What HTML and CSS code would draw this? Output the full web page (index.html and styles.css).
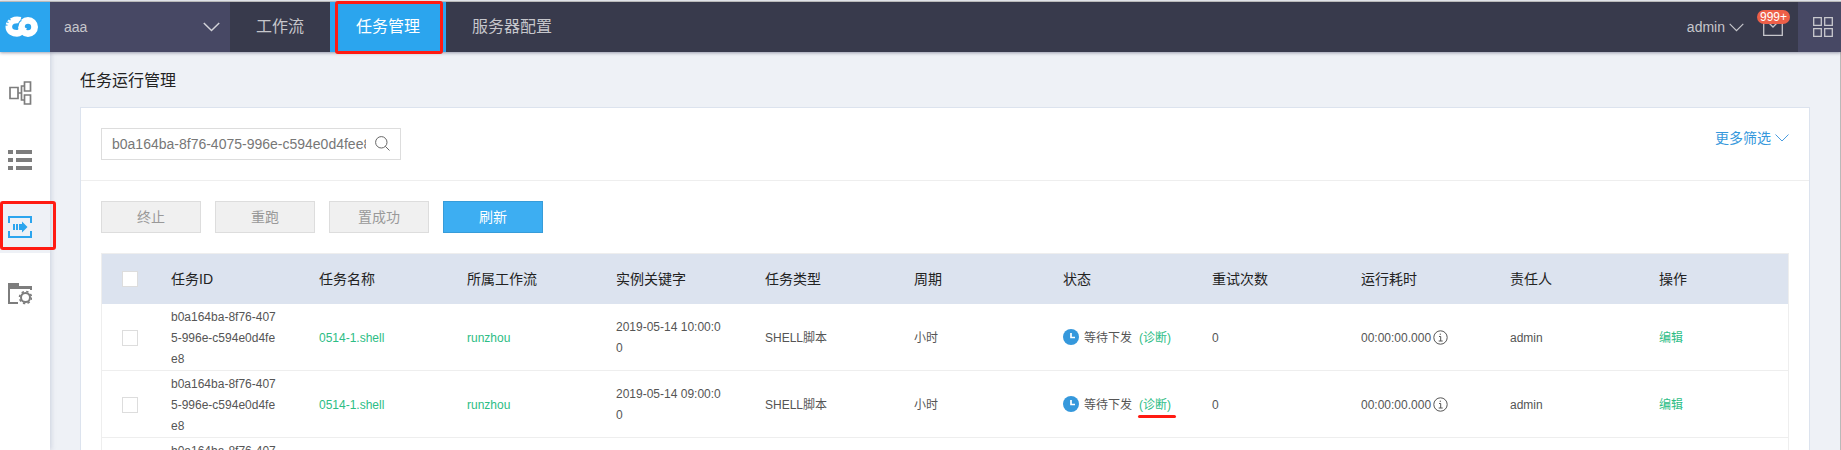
FILE: index.html
```
<!DOCTYPE html>
<html lang="zh-CN">
<head>
<meta charset="utf-8">
<title>任务运行管理</title>
<link rel="stylesheet" href="styles.css">
</head>
<body>
<header class="topbar">
  <div class="logo">
    <svg width="36" height="22" viewBox="0 0 36 22" fill="none" stroke="#fff">
      <path d="M17.500 4.300C12 3 5.800 5 5.800 10.800C5.800 16 10.500 17.400 14 17.400C17.500 17.400 19.500 14 21 11" stroke-width="6.600"/>
      <circle cx="25" cy="11" r="6.600" stroke-width="6.800"/>
      <path d="M18.500 4.500C14.500 5.500 16 10 13.500 13.500M1.500 5l4 1.500M.5 8.500l4 .7M5 2l2.500 2" stroke="#2ba5ee" stroke-width="1.100"/>
    </svg>
  </div>
  <div class="project">aaa<svg width="17" height="10" viewBox="0 0 17 10" fill="none" stroke="#d3d3d9" stroke-width="1.500"><path d="M.8 1l7.700 7.500L16.200 1"/></svg></div>
  <nav class="nav">
    <a>工作流</a>
    <a class="active">任务管理<span class="mark mark-nav"></span></a>
    <a>服务器配置</a>
  </nav>
  <div class="user">admin<svg width="15" height="9" viewBox="0 0 15 9" fill="none" stroke="#c6c6cb" stroke-width="1.200"><path d="M.7.8l6.800 6.800L14.300.8"/></svg></div>
  <div class="mail">
    <svg width="20" height="19" viewBox="0 0 20 19" fill="none" stroke="#c6c6cb" stroke-width="1.300"><path d="M.7 2v16.300h18.600V2zM5 5l5 5 5-5"/></svg>
    <span class="count">999+</span>
  </div>
  <div class="apps">
    <svg width="20" height="20" viewBox="0 0 20 20" fill="none" stroke="#c9c9ce" stroke-width="1.300"><path d="M.7.700h7.600v7.600H.7zM11.700.700h7.600v7.600h-7.600zM.7 11.700h7.600v7.600H.7zM11.700 11.700h7.600v7.600h-7.600z"/></svg>
  </div>
</header>
<div class="body">
  <aside class="side">
    <a><svg width="24" height="26" viewBox="0 0 24 26" fill="none" stroke="#7d7d7d" stroke-width="1.700"><path d="M2 7.500h8v11H2zM16.500 2h6v9h-6zM16.500 15h6v9h-6zM10 13h3M16.500 6h-3v14h3"/></svg></a>
    <a><svg width="24" height="20" viewBox="0 0 24 20" fill="#7d7d7d"><path d="M0 0h5v4H0zM8 0h16v4H8zM0 8h5v4H0zM8 8h16v4H8zM0 16h5v4H0zM8 16h16v4H8z"/></svg></a>
    <a class="on"><svg width="24" height="22" viewBox="0 0 24 22"><path d="M1 7V1h22v6M1 15v6h22v-6" fill="none" stroke="#2ba5ee" stroke-width="2"/><path d="M5 8h2v6H5zM8 8h2v6H8zM11 8h3V5.500l5.500 5.500-5.500 5.500V14h-3z" fill="#2ba5ee"/></svg><span class="mark mark-side"></span></a>
    <a><svg width="24" height="22" viewBox="0 0 24 22"><path d="M0 0h11v3h13v4h-2V6H2v13h8v2H0z" fill="#7d7d7d"/><g fill="none" stroke="#7d7d7d"><circle cx="17.500" cy="14.500" r="4.500" stroke-width="2"/><circle cx="17.500" cy="14.500" r="6" stroke-width="1.600" stroke-dasharray="2.350 2.362"/></g></svg></a>
  </aside>
  <main class="main">
    <h1>任务运行管理</h1>
    <section class="card">
      <div class="filter">
        <div class="search"><span>b0a164ba-8f76-4075-996e-c594e0d4fee8</span><svg width="15" height="15" viewBox="0 0 15 15" fill="none" stroke="#666"><circle cx="6.300" cy="6.300" r="5.700"/><path d="M10.300 10.300l4.200 4.200"/></svg></div>
        <a class="more">更多筛选<svg width="14" height="8" viewBox="0 0 14 8" fill="none" stroke="#4a9de0"><path d="M.5.500L7 7 13.500.5"/></svg></a>
      </div>
      <div class="buttons"><button>终止</button><button>重跑</button><button>置成功</button><button class="primary">刷新</button></div>
      <div class="table">
        <div class="row head"><div><i class="check"></i></div><div>任务ID</div><div>任务名称</div><div>所属工作流</div><div>实例关键字</div><div>任务类型</div><div>周期</div><div>状态</div><div>重试次数</div><div>运行耗时</div><div>责任人</div><div>操作</div></div>
        <div class="row"><div><i class="check"></i></div><div>b0a164ba-8f76-4075-996e-c594e0d4fee8</div><div class="link">0514-1.shell</div><div class="link">runzhou</div><div>2019-05-14 10:00:00</div><div>SHELL脚本</div><div>小时</div><div class="status"><svg class="clock" width="16" height="16" viewBox="0 0 16 16"><circle cx="8" cy="8" r="8" fill="#3598dc"/><path d="M8 4v4.500h4" fill="none" stroke="#fff" stroke-width="1.700"/></svg>等待下发<span class="link diag">(诊断)</span></div><div>0</div><div class="time">00:00:00.000<svg width="15" height="15" viewBox="0 0 15 15" fill="none" stroke="#555"><circle cx="7.500" cy="7.500" r="6.700"/><path d="M6 6.500h1.700v4.500M5.700 11h4M6.700 4.200h1.300"/></svg></div><div>admin</div><div class="link">编辑</div></div>
        <div class="row"><div><i class="check"></i></div><div>b0a164ba-8f76-4075-996e-c594e0d4fee8</div><div class="link">0514-1.shell</div><div class="link">runzhou</div><div>2019-05-14 09:00:00</div><div>SHELL脚本</div><div>小时</div><div class="status"><svg class="clock" width="16" height="16" viewBox="0 0 16 16"><circle cx="8" cy="8" r="8" fill="#3598dc"/><path d="M8 4v4.500h4" fill="none" stroke="#fff" stroke-width="1.700"/></svg>等待下发<span class="link diag">(诊断)<span class="underline"></span></span></div><div>0</div><div class="time">00:00:00.000<svg width="15" height="15" viewBox="0 0 15 15" fill="none" stroke="#555"><circle cx="7.500" cy="7.500" r="6.700"/><path d="M6 6.500h1.700v4.500M5.700 11h4M6.700 4.200h1.300"/></svg></div><div>admin</div><div class="link">编辑</div></div>
        <div class="row"><div></div><div>b0a164ba-8f76-4075-996e-c594e0d4fee8</div><div></div><div></div><div></div><div></div><div></div><div></div><div></div><div></div><div></div><div></div></div>
      </div>
    </section>
  </main>
</div>
</body>
</html>
```
FILE: styles.css
```
* { box-sizing: border-box; }
body {
  margin: 0;
  height: 450px;
  overflow: hidden;
  display: flex;
  flex-direction: column;
  background: #eef1f6;
  font: 12px/21px "Liberation Sans", "Noto Sans CJK SC", sans-serif;
  color: #555;
}
svg { display: block; flex: none; }

.topbar {
  position: relative;
  z-index: 2;
  flex: none;
  display: flex;
  height: 51px;
  margin-top: 1px;
  border-top: 1px solid #b9b9b9;
  background: #383a4c;
  color: #c6c6cb;
  box-shadow: 0 1px 3px rgba(70, 71, 99, .5);
}
.logo { width: 50px; padding-right: 8px; display: flex; align-items: center; justify-content: center; background: #2ba5ee; }
.project {
  width: 180px;
  padding: 0 10px 0 14px;
  display: flex;
  align-items: center;
  justify-content: space-between;
  background: #474864;
  font-size: 14px;
}
.nav { display: flex; flex: 1; font-size: 16px; line-height: 50px; }
.nav a { position: relative; padding: 0 26px; }
.nav .active { background: #2ba5ee; color: #fff; }
.mark { position: absolute; border: 3px solid #ff1b12; border-radius: 3px; }
.mark-nav { left: 5px; top: -1px; width: 108px; height: 53px; }
.user { display: flex; align-items: center; gap: 4px; font-size: 14px; margin-right: 19px; }
.mail { position: relative; width: 35px; padding-top: 15px; }
.count {
  position: absolute;
  left: -6px;
  top: 8px;
  width: 33px;
  height: 14px;
  border-radius: 7px;
  background: #ed5f48;
  color: #fff;
  font-size: 12px;
  line-height: 14px;
  text-align: center;
}
.apps { width: 43px; padding-left: 15px; display: flex; align-items: center; background: #474864; }

.body { flex: 1; display: flex; min-height: 0; border-right: 1px solid #b9b9b9; }
.side {
  width: 50px;
  flex: none;
  padding-top: 15px;
  display: flex;
  flex-direction: column;
  gap: 15px;
  background: #fff;
  box-shadow: 1px 0 5px rgba(100, 110, 150, .25);
}
.side a { position: relative; height: 52px; flex: none; padding-left: 8px; display: flex; align-items: center; }
.side .on { background: #eef1f6; }
.mark-side { left: 0; top: 0; width: 56px; height: 49px; }

.main { flex: 1; min-width: 0; padding: 0 30px; display: flex; flex-direction: column; }
h1 { flex: none; margin: 0; height: 55px; font-size: 16px; font-weight: 400; line-height: 58px; color: #222; }
.card { flex: 1; min-height: 0; overflow: hidden; background: #fff; border: 1px solid #dce3ee; border-bottom: 0; }
.filter {
  height: 73px;
  padding: 20px;
  display: flex;
  justify-content: space-between;
  border-bottom: 1px solid #eee;
}
.search {
  width: 300px;
  height: 32px;
  padding: 0 10px;
  display: flex;
  align-items: center;
  justify-content: space-between;
  border: 1px solid #ddd;
  font-size: 14px;
  color: #777;
}
.search span { width: 254px; overflow: hidden; white-space: nowrap; }
.search svg { margin-bottom: 2px; }
.more { display: flex; align-items: center; height: 20px; gap: 4px; font-size: 14px; color: #3598dc; }
.buttons { display: flex; gap: 14px; padding: 20px; }
.buttons button {
  width: 100px;
  height: 32px;
  padding: 0;
  border: 1px solid #ddd;
  background: #f0f0f0;
  color: #999;
  font: 14px/30px "Liberation Sans", "Noto Sans CJK SC", sans-serif;
}
.buttons .primary { background: #3daef2; border-color: #379cd9; color: #fff; }

.table { margin: 0 20px; border: 1px solid #eee; }
.row {
  display: grid;
  grid-template-columns: 49px repeat(2, 148px) repeat(8, 149px) 1fr;
  align-items: center;
  height: 67px;
  padding-top: 2px;
  border-bottom: 1px solid #eee;
  word-break: break-all;
}
.row > div { padding: 0 20px; }
.head { height: 50px; padding-top: 0; border: 0; background: #dce3ef; color: #222; font-size: 14px; }
.check { display: block; width: 16px; height: 16px; border: 1px solid #ddd; background: #fff; }
.link { color: #2dbd85; }
.row .status, .row .time { display: flex; align-items: center; white-space: nowrap; }
.row .status { padding-right: 0; }
.clock { margin: 0 5px 2px 0; }
.diag { position: relative; margin-left: 7px; }
.time { gap: 2px; }
.time svg { margin-bottom: 2px; }
.underline { position: absolute; left: -1px; top: 20px; width: 38px; height: 3px; border-radius: 2px; background: #ff1b12; }
```
